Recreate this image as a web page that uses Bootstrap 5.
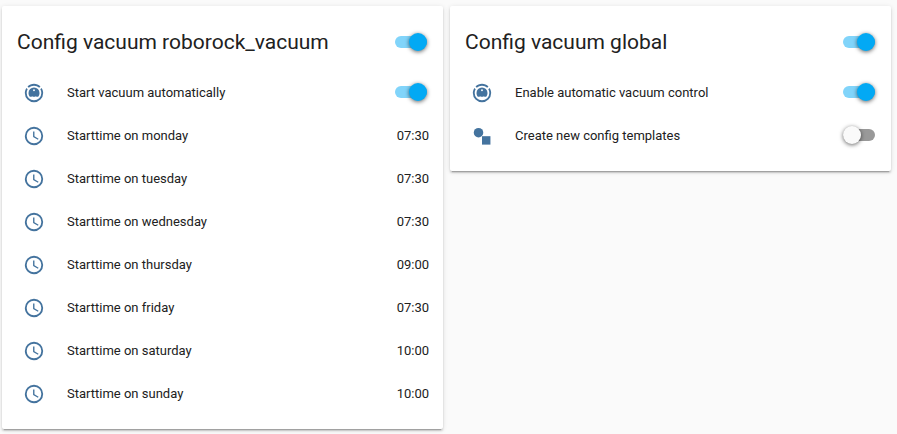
<!DOCTYPE html>
<html lang="en">
<head>
<meta charset="utf-8">
<meta name="viewport" content="width=device-width, initial-scale=1">
<title>Vacuum configuration</title>
<link rel="stylesheet" href="https://cdn.jsdelivr.net/npm/bootstrap@5.3.0/dist/css/bootstrap.min.css">
<style>
  body { background: #fafafa; color: #212121; font-family: Roboto, "Noto Sans", sans-serif; font-size: 13px; line-height: 18px; }
  .board { padding: 6px 6px 5px 2px; }
  .board > .row { --bs-gutter-x: 7px; --bs-gutter-y: 7px; margin-top: 0; }
  .board > .row > * { margin-top: 0; }
  .board > .row > * + * { margin-top: 7px; }
  @media (min-width: 768px) { .board > .row > * + * { margin-top: 0; } }
  .panel { border: 0; border-radius: 2px; color: inherit; padding: 14px 14px 17px 15px;
    box-shadow: 0 2px 2px 0 rgba(0,0,0,.14), 0 1px 5px 0 rgba(0,0,0,.12), 0 3px 1px -2px rgba(0,0,0,.2); }
  .panel-title { font-size: 21px; line-height: 44px; font-weight: 400; }
  .panel-head { margin-bottom: 11px; }
  .entities { gap: 7px; }
  .entity { min-height: 36px; }
  .entity-icon { width: 34px; height: 36px; color: #44739e; }
  .entity-icon svg { width: 22px; height: 22px; fill: currentColor; }
  .entity-name { margin-left: 16px; }
  .toggle { appearance: none; position: relative; flex: none; width: 32px; height: 18px; margin: 0 2px; cursor: pointer; }
  .entity .toggle { margin-bottom: 2px; }
  .toggle::before { content: ""; position: absolute; inset: 3px 0; border-radius: 6px; background: #999; }
  .toggle::after { content: ""; position: absolute; top: 0; left: 0; width: 18px; height: 18px; border-radius: 50%; background: #fafafa; box-shadow: 0 1px 4px rgba(0,0,0,.6); }
  .toggle:checked::before { background: #81d4fa; }
  .toggle:checked::after { left: auto; right: 0; background: #03a9f4; }
</style>
<script src="https://cdn.jsdelivr.net/npm/bootstrap@5.3.0/dist/js/bootstrap.bundle.min.js"></script>
</head>
<body>
<svg class="d-none" aria-hidden="true">
  <symbol id="i-vacuum" viewBox="0 0 24 24"><path d="M12,2C14.65,2 17.19,3.06 19.07,4.93L17.65,6.35C16.15,4.85 14.12,4 12,4C9.88,4 7.84,4.84 6.35,6.35L4.93,4.93C6.81,3.06 9.35,2 12,2M3.66,6.5L5.11,7.94C4.39,9.17 4,10.57 4,12A8,8 0 0,0 12,20A8,8 0 0,0 20,12C20,10.57 19.61,9.17 18.88,7.94L20.34,6.5C21.42,8.12 22,10.04 22,12A10,10 0 0,1 12,22A10,10 0 0,1 2,12C2,10.04 2.58,8.12 3.66,6.5M12,6A6,6 0 0,1 18,12C18,13.5 17.5,15 16.5,16.2H14.8L14,15.5L13.2,16.2H10.8L10,15.5L9.2,16.2H7.5C6.5,15 6,13.5 6,12A6,6 0 0,1 12,6M12,8A1,1 0 0,0 11,9A1,1 0 0,0 12,10A1,1 0 0,0 13,9A1,1 0 0,0 12,8Z"/></symbol>
  <symbol id="i-clock" viewBox="0 0 24 24"><path d="M12,20A8,8 0 0,0 20,12A8,8 0 0,0 12,4A8,8 0 0,0 4,12A8,8 0 0,0 12,20M12,2A10,10 0 0,1 22,12A10,10 0 0,1 12,22C6.47,22 2,17.5 2,12A10,10 0 0,1 12,2M12.5,7V12.25L17,14.92L16.25,16.15L11,13V7H12.5Z"/></symbol>
  <symbol id="i-shapes" viewBox="0 0 24 24"><circle cx="8.2" cy="8.4" r="5.2"/><path d="M12 12.2h9.2v9.2h-9.2z"/></symbol>
</svg>
<main class="container-fluid board">
  <div class="row row-cols-1 row-cols-md-2 align-items-start">
    <div class="col">
      <section class="card panel">
        <div class="panel-head d-flex align-items-center justify-content-between">
          <h2 class="panel-title mb-0"><label for="all-roborock">Config vacuum roborock_vacuum</label></h2>
          <input class="toggle" type="checkbox" role="switch" id="all-roborock" checked>
        </div>
        <div class="entities d-flex flex-column">
          <div class="entity d-flex align-items-center"><span class="entity-icon d-flex align-items-center justify-content-center"><svg aria-hidden="true"><use href="#i-vacuum"/></svg></span><label class="entity-name flex-grow-1" for="start-auto">Start vacuum automatically</label><input class="toggle" type="checkbox" role="switch" id="start-auto" checked></div>
          <div class="entity d-flex align-items-center"><span class="entity-icon d-flex align-items-center justify-content-center"><svg aria-hidden="true"><use href="#i-clock"/></svg></span><span class="entity-name flex-grow-1">Starttime on monday</span><time>07:30</time></div>
          <div class="entity d-flex align-items-center"><span class="entity-icon d-flex align-items-center justify-content-center"><svg aria-hidden="true"><use href="#i-clock"/></svg></span><span class="entity-name flex-grow-1">Starttime on tuesday</span><time>07:30</time></div>
          <div class="entity d-flex align-items-center"><span class="entity-icon d-flex align-items-center justify-content-center"><svg aria-hidden="true"><use href="#i-clock"/></svg></span><span class="entity-name flex-grow-1">Starttime on wednesday</span><time>07:30</time></div>
          <div class="entity d-flex align-items-center"><span class="entity-icon d-flex align-items-center justify-content-center"><svg aria-hidden="true"><use href="#i-clock"/></svg></span><span class="entity-name flex-grow-1">Starttime on thursday</span><time>09:00</time></div>
          <div class="entity d-flex align-items-center"><span class="entity-icon d-flex align-items-center justify-content-center"><svg aria-hidden="true"><use href="#i-clock"/></svg></span><span class="entity-name flex-grow-1">Starttime on friday</span><time>07:30</time></div>
          <div class="entity d-flex align-items-center"><span class="entity-icon d-flex align-items-center justify-content-center"><svg aria-hidden="true"><use href="#i-clock"/></svg></span><span class="entity-name flex-grow-1">Starttime on saturday</span><time>10:00</time></div>
          <div class="entity d-flex align-items-center"><span class="entity-icon d-flex align-items-center justify-content-center"><svg aria-hidden="true"><use href="#i-clock"/></svg></span><span class="entity-name flex-grow-1">Starttime on sunday</span><time>10:00</time></div>
        </div>
      </section>
    </div>
    <div class="col">
      <section class="card panel">
        <div class="panel-head d-flex align-items-center justify-content-between">
          <h2 class="panel-title mb-0"><label for="all-global">Config vacuum global</label></h2>
          <input class="toggle" type="checkbox" role="switch" id="all-global" checked>
        </div>
        <div class="entities d-flex flex-column">
          <div class="entity d-flex align-items-center"><span class="entity-icon d-flex align-items-center justify-content-center"><svg aria-hidden="true"><use href="#i-vacuum"/></svg></span><label class="entity-name flex-grow-1" for="auto-control">Enable automatic vacuum control</label><input class="toggle" type="checkbox" role="switch" id="auto-control" checked></div>
          <div class="entity d-flex align-items-center"><span class="entity-icon d-flex align-items-center justify-content-center"><svg aria-hidden="true"><use href="#i-shapes"/></svg></span><label class="entity-name flex-grow-1" for="new-templates">Create new config templates</label><input class="toggle" type="checkbox" role="switch" id="new-templates"></div>
        </div>
      </section>
    </div>
  </div>
</main>
</body>
</html>
